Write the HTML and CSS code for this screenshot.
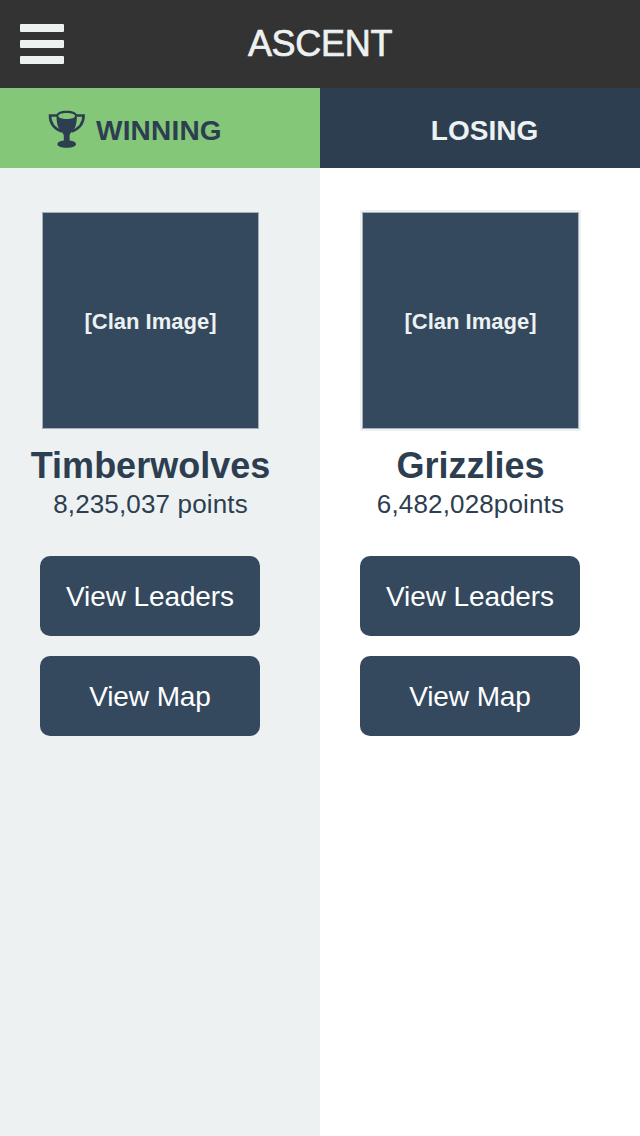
FILE: index.html
```html
<!DOCTYPE html>
<html lang="en">
<head>
<meta charset="utf-8">
<title>Ascent</title>
<link rel="stylesheet" href="styles.css">
</head>
<body>
<header class="topbar">
  <button class="menu" aria-label="Menu"><span class="bar"></span><span class="bar"></span><span class="bar"></span></button>
  <h1 class="title">ASCENT</h1>
</header>
<main class="columns">
  <section class="column column-winning">
    <div class="status status-winning">
      <svg class="trophy" width="38" height="38" viewBox="0 0 38 38" aria-hidden="true">
        <path fill="none" stroke="#2c3e50" stroke-width="2.6" d="M10 5.500H2C2 12 5.500 18.500 14 21.500M27.400 5.500H35.600C35.600 12 32 18.500 23.400 21.500"/>
        <path fill="#2c3e50" fill-rule="evenodd" d="M8.500 5.500C8.500 2.600 12.500 .8 18.700 .8S28.900 2.600 28.900 5.500C28.900 8.500 28.700 11.500 27.900 15C26.800 19.800 22.200 22 21.600 25.500V30.600C25.500 31 28 32.200 28 34.200C28 36.500 24 37.700 18.700 37.700S9.400 36.500 9.400 34.200C9.400 32.200 11.900 31 15.800 30.600V25.500C15.200 22 10.600 19.800 9.500 15C8.700 11.500 8.500 8.500 8.500 5.500ZM10.400 6C10.400 7.900 14 9 18.700 9S27 7.900 27 6S23.400 3.100 18.700 3.100S10.400 4.100 10.400 6Z"/>
      </svg>
      <span class="status-label">WINNING</span>
    </div>
    <div class="clan">
      <div class="clan-image"><span class="clan-image-label">[Clan Image]</span></div>
      <h2 class="clan-name">Timberwolves</h2>
      <p class="points">8,235,037 points</p>
      <button class="action">View Leaders</button>
      <button class="action">View Map</button>
    </div>
  </section>
  <section class="column column-losing">
    <div class="status status-losing"><span class="status-label">LOSING</span></div>
    <div class="clan">
      <div class="clan-image"><span class="clan-image-label">[Clan Image]</span></div>
      <h2 class="clan-name">Grizzlies</h2>
      <p class="points">6,482,028points</p>
      <button class="action">View Leaders</button>
      <button class="action">View Map</button>
    </div>
  </section>
</main>
</body>
</html>
```

FILE: styles.css
```css
* { box-sizing: border-box; }
body {
  margin: 0;
  min-height: 1136px;
  display: flex;
  flex-direction: column;
  font-family: "Liberation Sans", Arial, sans-serif;
  color: #2c3e50;
  background: #fff;
}
button { border: 0; padding: 0; font-family: inherit; }
.topbar {
  height: 88px;
  background: #333;
  display: grid;
  grid-template-columns: 84px 1fr 84px;
  align-items: center;
}
.menu {
  width: 44px;
  margin-left: 20px;
  background: none;
  display: flex;
  flex-direction: column;
  gap: 8px;
}
.bar { height: 8px; border-radius: 1px; background: #edf1f2; }
.title {
  margin: 0;
  text-align: center;
  font-size: 36px;
  line-height: 40px;
  font-weight: 400;
  letter-spacing: -0.3px;
  color: #edf1f2;
  -webkit-text-stroke: 0.7px #edf1f2;
  padding-bottom: 1px;
}
.columns { flex: 1; display: grid; grid-template-columns: 1fr 1fr; }
.column-winning { background: #edf1f2; }
.status {
  height: 80px;
  display: flex;
  align-items: center;
  font-size: 28px;
  font-weight: 700;
}
.status-label { padding-top: 5px; letter-spacing: 0.2px; }
.status-winning { background: #84c779; padding-left: 48px; gap: 10px; }
.status-losing { background: #2c3e50; color: #edf1f2; justify-content: center; padding-left: 9px; }
.status-losing .status-label { letter-spacing: 0; }
.trophy { margin-top: 2px; }
.clan {
  width: 301px;
  padding-top: 44px;
  display: flex;
  flex-direction: column;
  align-items: center;
}
.clan-image {
  width: 217px;
  height: 217px;
  border: 1px solid #a3afb9;
  box-shadow: 0 0 0 2px #edf1f2;
  background: #34495e;
  color: #edf1f2;
  font-size: 22px;
  font-weight: 700;
  display: flex;
  align-items: center;
  justify-content: center;
}
.clan-image-label { padding-top: 2px; }
.clan-name { margin: 17px 0 0; font-size: 36px; line-height: 40px; }
.points { margin: 3px 0 37px; font-size: 26px; line-height: 30px; letter-spacing: 0.15px; }
.action {
  width: 220px;
  height: 80px;
  margin: 0 1px 20px 0;
  padding-top: 2px;
  border-radius: 10px;
  background: #34495e;
  color: #fff;
  font-size: 28px;
  letter-spacing: -0.1px;
}
```
